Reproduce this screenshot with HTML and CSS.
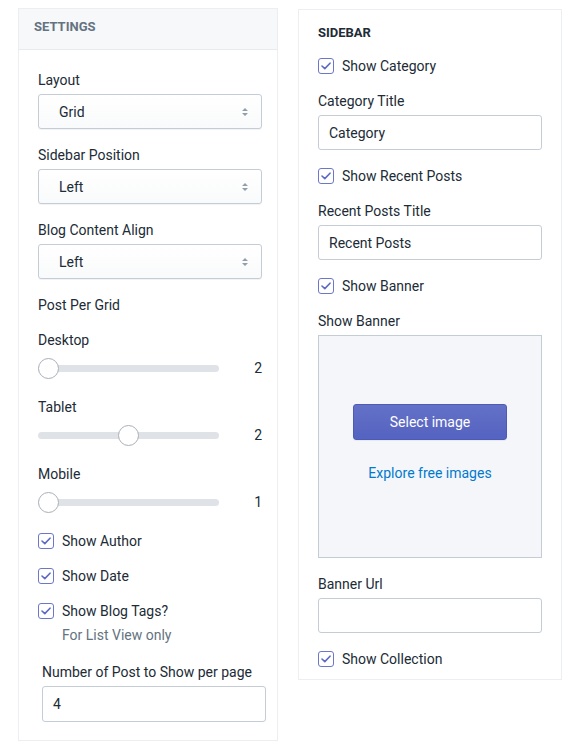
FILE: index.html
```html
<!DOCTYPE html>
<html>
<head>
<meta charset="utf-8">
<link rel="stylesheet" href="styles.css">
</head>
<body>
<div class="page">
  <section class="panel settings">
    <div class="panel-head">SETTINGS</div>
    <div class="panel-body">
      <div class="field">
        <div class="label">Layout</div>
        <div class="select"><span>Grid</span><svg class="arrows" width="8" height="10" viewBox="0 0 8 10"><path d="M4 1 L7 4 H1 Z M4 9 L7 6 H1 Z" fill="#919eab"/></svg></div>
      </div>
      <div class="field">
        <div class="label">Sidebar Position</div>
        <div class="select"><span>Left</span><svg class="arrows" width="8" height="10" viewBox="0 0 8 10"><path d="M4 1 L7 4 H1 Z M4 9 L7 6 H1 Z" fill="#919eab"/></svg></div>
      </div>
      <div class="field">
        <div class="label">Blog Content Align</div>
        <div class="select"><span>Left</span><svg class="arrows" width="8" height="10" viewBox="0 0 8 10"><path d="M4 1 L7 4 H1 Z M4 9 L7 6 H1 Z" fill="#919eab"/></svg></div>
      </div>
      <div class="label group-title">Post Per Grid</div>
      <div class="range-field">
        <div class="label">Desktop</div>
        <div class="range">
          <div class="track"><div class="thumb thumb-start"></div></div>
          <span class="range-val">2</span>
        </div>
      </div>
      <div class="range-field">
        <div class="label">Tablet</div>
        <div class="range">
          <div class="track"><div class="thumb thumb-mid"></div></div>
          <span class="range-val">2</span>
        </div>
      </div>
      <div class="range-field">
        <div class="label">Mobile</div>
        <div class="range">
          <div class="track"><div class="thumb thumb-start"></div></div>
          <span class="range-val">1</span>
        </div>
      </div>
      <div class="checks">
        <label class="check"><span class="box"><svg width="10" height="8" viewBox="0 0 10 8"><path d="M1 4 L3.8 6.6 L9 1.2" fill="none" stroke="#5c6ac4" stroke-width="1.6" stroke-linecap="round" stroke-linejoin="round"/></svg></span>Show Author</label>
        <label class="check"><span class="box"><svg width="10" height="8" viewBox="0 0 10 8"><path d="M1 4 L3.8 6.6 L9 1.2" fill="none" stroke="#5c6ac4" stroke-width="1.6" stroke-linecap="round" stroke-linejoin="round"/></svg></span>Show Date</label>
        <div class="check-wrap">
          <label class="check"><span class="box"><svg width="10" height="8" viewBox="0 0 10 8"><path d="M1 4 L3.8 6.6 L9 1.2" fill="none" stroke="#5c6ac4" stroke-width="1.6" stroke-linecap="round" stroke-linejoin="round"/></svg></span>Show Blog Tags?</label>
          <div class="help">For List View only</div>
        </div>
      </div>
      <div class="field shifted">
        <div class="label">Number of Post to Show per page</div>
        <div class="input">4</div>
      </div>
    </div>
  </section>

  <section class="panel sidebar">
    <div class="side-title">SIDEBAR</div>
    <label class="check"><span class="box"><svg width="10" height="8" viewBox="0 0 10 8"><path d="M1 4 L3.8 6.6 L9 1.2" fill="none" stroke="#5c6ac4" stroke-width="1.6" stroke-linecap="round" stroke-linejoin="round"/></svg></span>Show Category</label>
    <div class="field">
      <div class="label">Category Title</div>
      <div class="input">Category</div>
    </div>
    <label class="check"><span class="box"><svg width="10" height="8" viewBox="0 0 10 8"><path d="M1 4 L3.8 6.6 L9 1.2" fill="none" stroke="#5c6ac4" stroke-width="1.6" stroke-linecap="round" stroke-linejoin="round"/></svg></span>Show Recent Posts</label>
    <div class="field">
      <div class="label">Recent Posts Title</div>
      <div class="input">Recent Posts</div>
    </div>
    <label class="check"><span class="box"><svg width="10" height="8" viewBox="0 0 10 8"><path d="M1 4 L3.8 6.6 L9 1.2" fill="none" stroke="#5c6ac4" stroke-width="1.6" stroke-linecap="round" stroke-linejoin="round"/></svg></span>Show Banner</label>
    <div class="field">
      <div class="label">Show Banner</div>
      <div class="dropzone">
        <button class="btn-primary">Select image</button>
        <a class="link">Explore free images</a>
      </div>
    </div>
    <div class="field">
      <div class="label">Banner Url</div>
      <div class="input"></div>
    </div>
    <label class="check last"><span class="box"><svg width="10" height="8" viewBox="0 0 10 8"><path d="M1 4 L3.8 6.6 L9 1.2" fill="none" stroke="#5c6ac4" stroke-width="1.6" stroke-linecap="round" stroke-linejoin="round"/></svg></span>Show Collection</label>
  </section>
</div>
</body>
</html>
```

FILE: styles.css
```css
* { box-sizing: border-box; }
html, body { margin: 0; padding: 0; background: #fff; }
body {
  font-family: Roboto, "Liberation Sans", Arial, sans-serif;
  font-size: 14px;
  line-height: 20px;
  color: #212b36;
}
.page {
  display: flex;
  align-items: flex-start;
  gap: 20px;
  padding: 8px 0 0 18px;
}
.panel {
  border: 1px solid #eceef1;
  background: #fff;
}
.settings { width: 260px; }
.panel-head {
  height: 41px;
  background: #f7f8fa;
  border-bottom: 1px solid #e8ebee;
  padding: 0 0 0 15px;
  font-size: 13px;
  font-weight: 700;
  line-height: 36px;
  color: #637381;
}
.panel-body { padding: 20px 15px 18px 19px; }
.label { line-height: 20px; }
.field { margin-bottom: 16px; }
.field .label { margin-bottom: 4px; }
.select {
  height: 35px;
  border: 1px solid #c4cdd5;
  border-radius: 3px;
  background: linear-gradient(#fff, #f9fafb);
  box-shadow: 0 1px 0 rgba(22,29,37,0.05);
  display: flex;
  align-items: center;
  justify-content: space-between;
  padding: 0 12px 0 20px;
}
.arrows { display: block; }
.group-title { margin-bottom: 15px; }
.range-field { margin-bottom: 18px; }
.range-field .label { margin-bottom: 7px; }
.range {
  display: flex;
  align-items: center;
  height: 22px;
}
.track {
  position: relative;
  width: 181px;
  height: 7px;
  border-radius: 4px;
  background: #dfe3e8;
}
.thumb {
  position: absolute;
  top: -7px;
  width: 21px;
  height: 21px;
  border-radius: 50%;
  background: #fff;
  border: 1px solid #a9b0b8;
}
.thumb-start { left: 0; }
.thumb-mid { left: calc(50% - 10.5px); }
.range-val { margin-left: auto; }
.checks { display: flex; flex-direction: column; gap: 15px; margin-top: 0; margin-bottom: 17px; }
.check {
  display: flex;
  align-items: center;
  gap: 8px;
  line-height: 20px;
}
.box {
  width: 16px;
  height: 16px;
  border: 1.5px solid #6c77c8;
  border-radius: 3px;
  display: flex;
  align-items: center;
  justify-content: center;
  background: #fff;
}
.box svg { display: block; }
.help { padding-left: 24px; margin-top: 4px; color: #637381; }
.shifted { margin: 0 -4px 0 4px; }
.input {
  height: 36px;
  border: 1px solid #c4cdd5;
  border-radius: 3px;
  background: #fff;
  padding: 0 10px;
  display: flex;
  align-items: center;
}
.sidebar {
  width: 264px;
  margin-top: 1px;
  padding: 14px 19px 10px 19px;
}
.side-title {
  font-size: 13px;
  font-weight: 700;
  line-height: 18px;
  margin-bottom: 14px;
}
.sidebar .check { margin-bottom: 15px; }
.sidebar .check.last { margin-bottom: 0; }
.sidebar .field { margin-bottom: 16px; }
.sidebar .input { height: 35px; }
.dropzone {
  height: 223px;
  border: 1px solid #c4cdd5;
  background: #f4f6fa;
  display: flex;
  flex-direction: column;
  align-items: center;
  padding-top: 68px;
}
.btn-primary {
  width: 154px;
  height: 36px;
  border: 1px solid #4e5bb5;
  border-radius: 3px;
  background: linear-gradient(#6371c7, #5563c1);
  color: #fff;
  font-family: inherit;
  font-size: 14px;
  box-shadow: 0 1px 0 rgba(22,29,37,0.05);
}
.link {
  margin-top: 23px;
  color: #007ace;
  line-height: 20px;
}
```
